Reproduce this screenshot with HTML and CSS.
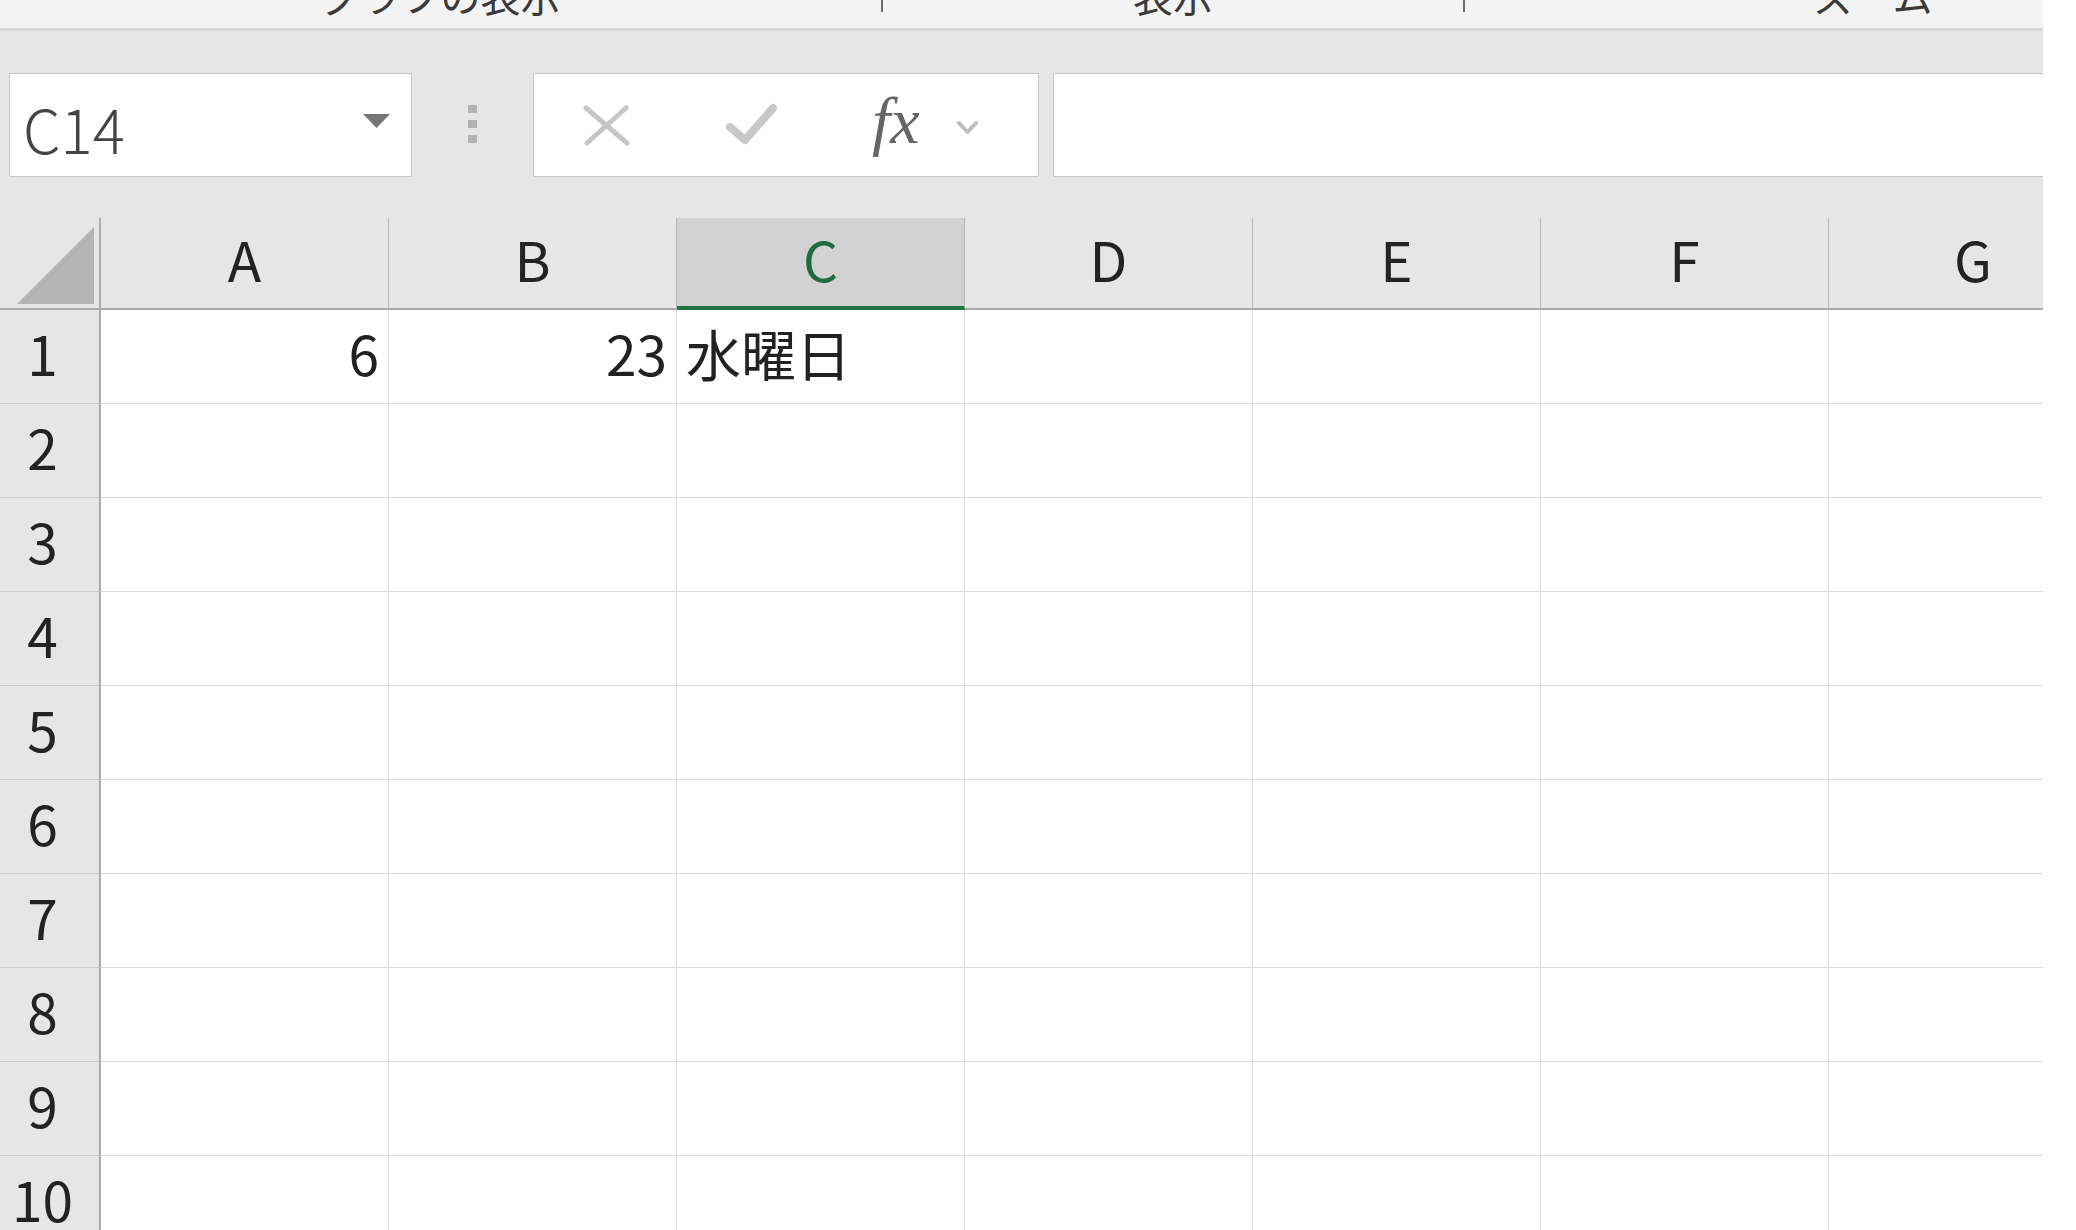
FILE: index.html
```html
<!DOCTYPE html>
<html lang="ja">
<head>
<meta charset="utf-8">
<title>Excel</title>
<link rel="stylesheet" href="styles.css">
</head>
<body>
<div class="app">
  <div class="ribbon">
    <div class="grp g1"><span class="glabel">グラフの表示</span></div>
    <div class="tick"></div>
    <div class="grp g2"><span class="glabel">表示</span></div>
    <div class="tick"></div>
    <div class="grp g3"><span class="glabel">ズーム</span></div>
  </div>

  <div class="fbar">
    <div class="namebox">
      <span class="nametext">C14</span>
      <svg class="ddtri" width="27" height="14" viewBox="0 0 27 14"><polygon points="0,0 27,0 13.5,14" fill="#767676"/></svg>
    </div>
    <div class="dots"><i></i><i></i><i></i></div>
    <div class="fbtns">
      <svg class="ic-x" width="47" height="41" viewBox="0 0 47 41"><path d="M3 3 L44 38 M43 3 L4 38" stroke="#c6c6c6" stroke-width="5" stroke-linecap="round" fill="none"/></svg>
      <svg class="ic-ok" width="51" height="42" viewBox="0 0 51 42"><path d="M4 24 L19 37 L47 5" stroke="#c8c8c8" stroke-width="8" stroke-linecap="round" stroke-linejoin="round" fill="none"/></svg>
      <span class="fx">fx</span>
      <svg class="ic-dd" width="21" height="15" viewBox="0 0 21 15"><path d="M2 3 L10.5 12 L19 3" stroke="#bdbdbd" stroke-width="4" stroke-linecap="round" stroke-linejoin="round" fill="none"/></svg>
    </div>
    <div class="finput"></div>
  </div>

  <div class="sheet">
    <div class="corner"><svg width="99" height="90" viewBox="0 0 99 90"><polygon points="17,86 94,86 94,9" fill="#b4b4b4"/></svg></div>
    <div class="ch">A</div><div class="ch">B</div><div class="ch sel">C</div><div class="ch">D</div><div class="ch">E</div><div class="ch">F</div><div class="ch last">G</div>

    <div class="rh">1</div><div class="c num">6</div><div class="c num">23</div><div class="c">水曜日</div><div class="c"></div><div class="c"></div><div class="c"></div><div class="c last"></div>
    <div class="rh">2</div><div class="c"></div><div class="c"></div><div class="c"></div><div class="c"></div><div class="c"></div><div class="c"></div><div class="c last"></div>
    <div class="rh">3</div><div class="c"></div><div class="c"></div><div class="c"></div><div class="c"></div><div class="c"></div><div class="c"></div><div class="c last"></div>
    <div class="rh">4</div><div class="c"></div><div class="c"></div><div class="c"></div><div class="c"></div><div class="c"></div><div class="c"></div><div class="c last"></div>
    <div class="rh">5</div><div class="c"></div><div class="c"></div><div class="c"></div><div class="c"></div><div class="c"></div><div class="c"></div><div class="c last"></div>
    <div class="rh">6</div><div class="c"></div><div class="c"></div><div class="c"></div><div class="c"></div><div class="c"></div><div class="c"></div><div class="c last"></div>
    <div class="rh">7</div><div class="c"></div><div class="c"></div><div class="c"></div><div class="c"></div><div class="c"></div><div class="c"></div><div class="c last"></div>
    <div class="rh">8</div><div class="c"></div><div class="c"></div><div class="c"></div><div class="c"></div><div class="c"></div><div class="c"></div><div class="c last"></div>
    <div class="rh">9</div><div class="c"></div><div class="c"></div><div class="c"></div><div class="c"></div><div class="c"></div><div class="c"></div><div class="c last"></div>
    <div class="rh">10</div><div class="c"></div><div class="c"></div><div class="c"></div><div class="c"></div><div class="c"></div><div class="c"></div><div class="c last"></div>
  </div>
</div>
</body>
</html>
```

FILE: styles.css
```css
html, body {
  margin: 0;
  padding: 0;
  background: #ffffff;
}
body {
  width: 2076px;
  height: 1230px;
  overflow: hidden;
  font-family: "Noto Sans CJK JP", "Noto Sans", sans-serif;
}
.app {
  width: 2043px;
  height: 1230px;
  overflow: hidden;
}

/* ribbon group labels (cut off at top, as in the reference) */
.ribbon {
  display: flex;
  height: 28px;
  background: #f3f3f3;
  border-bottom: 3px solid #d6d6d6;
  overflow: hidden;
}
.grp {
  flex: none;
  height: 28px;
  text-align: center;
}
.g1 { width: 881px; }
.g2 { width: 580px; }
.g3 { width: 816px; }
.glabel {
  display: block;
  font-size: 40px;
  line-height: 40px;
  margin-top: -25px;
  color: #3a3a3a;
}
.tick {
  flex: none;
  width: 2px;
  height: 12px;
  background: #6a6a6a;
}

/* formula bar */
.fbar {
  display: flex;
  align-items: flex-start;
  height: 187px;
  box-sizing: border-box;
  padding: 42px 0 0 9px;
  background: #e6e6e6;
}
.namebox {
  flex: none;
  display: flex;
  align-items: center;
  width: 403px;
  height: 104px;
  box-sizing: border-box;
  padding-left: 13px;
  background: #ffffff;
  border: 1px solid #c6c6c6;
}
.nametext {
  font-size: 60px;
  line-height: 60px;
  font-weight: 300;
  color: #444444;
  padding-top: 6px;
}
.ddtri {
  margin-left: auto;
  margin-right: 21px;
  margin-top: -8px;
}
.dots {
  flex: none;
  display: flex;
  flex-direction: column;
  gap: 7px;
  margin-left: 56px;
  margin-top: 32px;
}
.dots i {
  display: block;
  width: 9px;
  height: 8px;
  background: #b2b2b2;
}
.fbtns {
  flex: none;
  display: flex;
  align-items: center;
  width: 506px;
  height: 104px;
  box-sizing: border-box;
  margin-left: 56px;
  background: #ffffff;
  border: 1px solid #c6c6c6;
}
.ic-x { margin-left: 49px; }
.ic-ok { margin-left: 96px; margin-top: -2px; }
.fx {
  display: block;
  width: 52px;
  margin-left: 95px;
  font-family: "Liberation Serif", "DejaVu Serif", serif;
  font-style: italic;
  font-size: 66px;
  line-height: 66px;
  color: #666666;
  margin-top: -8px;
}
.ic-dd { margin-left: 33px; margin-top: 4px; }
.finput {
  flex: 1;
  height: 104px;
  box-sizing: border-box;
  margin-left: 14px;
  background: #ffffff;
  border: 1px solid #c6c6c6;
  border-right: none;
}

/* sheet grid */
.sheet {
  display: grid;
  grid-template-columns: 101px repeat(7, 288px);
  grid-template-rows: 92px repeat(10, 94px);
  font-size: 55px;
  line-height: 1;
}
.corner {
  background: #e6e6e6;
  border-right: 2px solid #ababab;
  border-bottom: 2px solid #ababab;
  box-sizing: border-box;
}
.corner svg { display: block; }
.ch {
  display: flex;
  align-items: center;
  justify-content: center;
  box-sizing: border-box;
  padding-bottom: 10px;
  background: #e6e6e6;
  border-right: 1px solid #b8b8b8;
  border-bottom: 2px solid #ababab;
  color: #232323;
}
.ch.sel {
  background: #d2d2d2;
  color: #1f6b42;
  border-bottom: 4px solid #217346;
  padding-bottom: 8px;
}
.ch.last { border-right: none; }
.rh {
  display: flex;
  align-items: center;
  justify-content: center;
  box-sizing: border-box;
  padding-right: 14px;
  padding-bottom: 8px;
  background: #e6e6e6;
  border-right: 2px solid #ababab;
  border-bottom: 1px solid #c9c9c9;
  color: #232323;
}
.c {
  display: flex;
  align-items: center;
  box-sizing: border-box;
  padding: 0 9px 8px;
  background: #ffffff;
  border-right: 1px solid #dadada;
  border-bottom: 1px solid #dadada;
  color: #222222;
  white-space: nowrap;
}
.c.num { justify-content: flex-end; }
.c.last { border-right: none; }
```
